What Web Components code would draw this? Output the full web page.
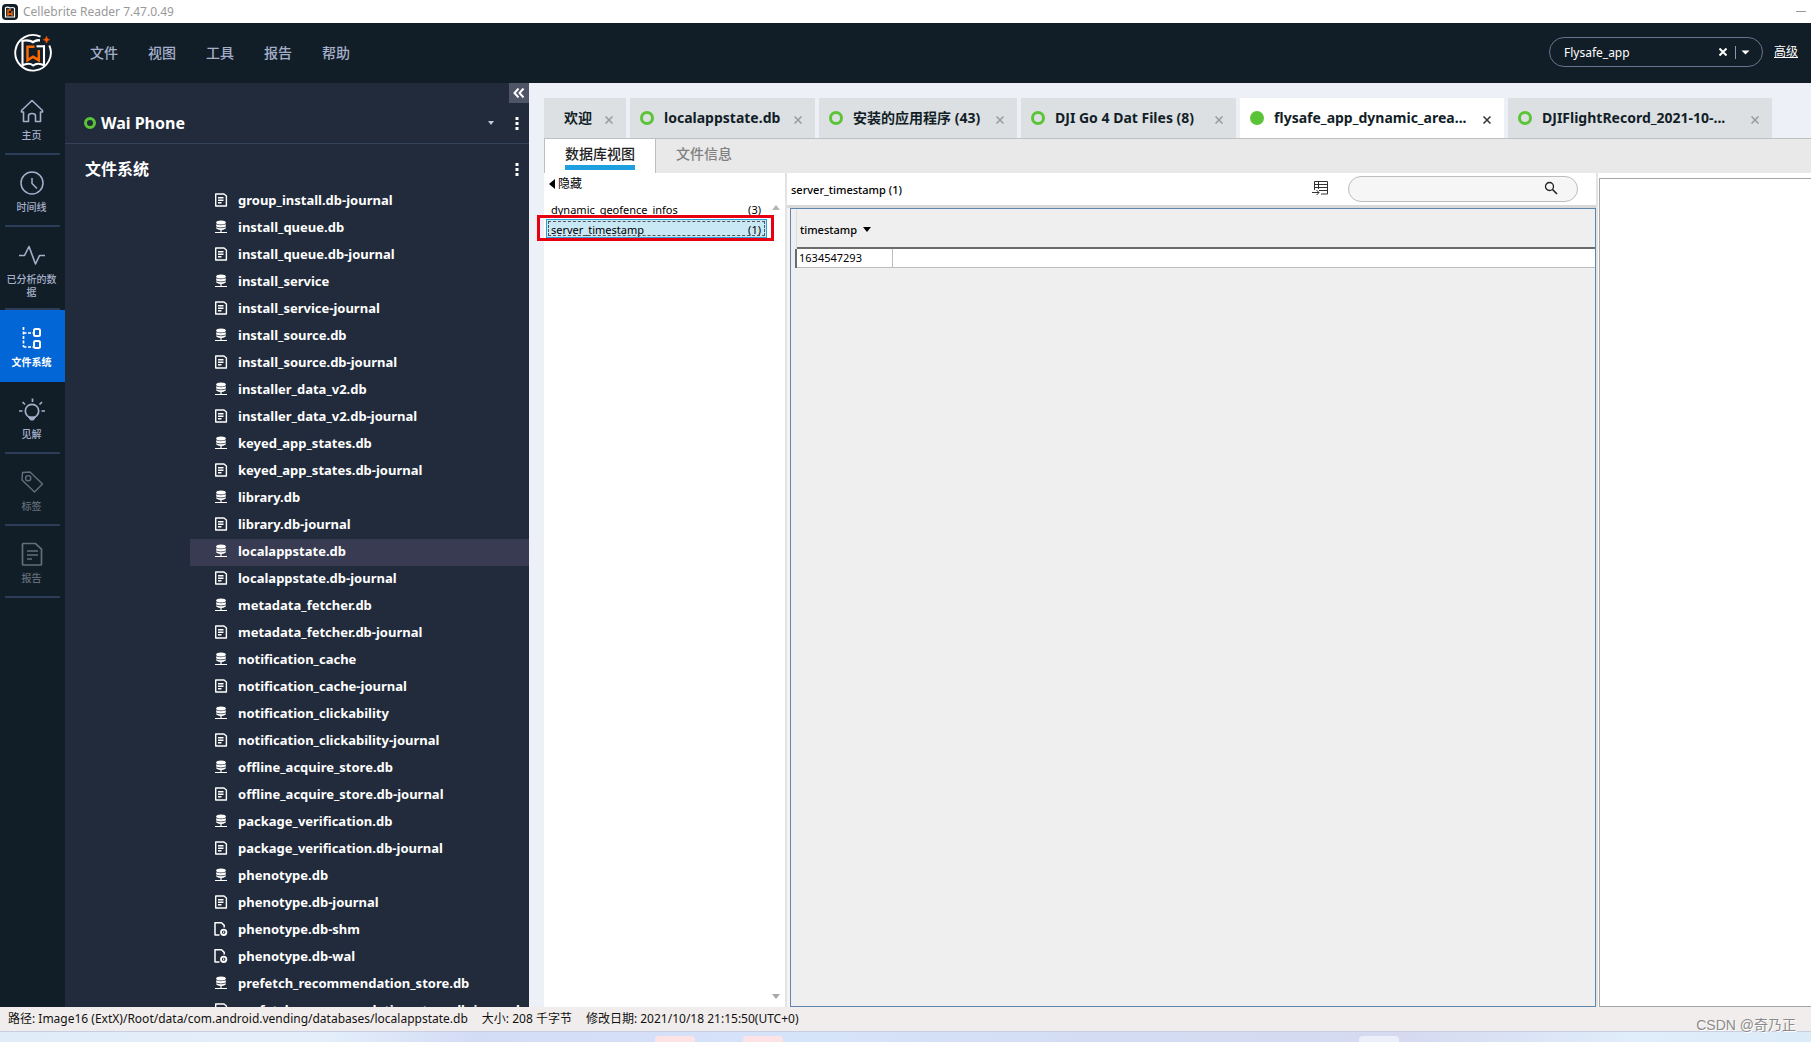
<!DOCTYPE html>
<html lang="zh">
<head>
<meta charset="utf-8">
<title>Cellebrite Reader 7.47.0.49</title>
<style>
  html, body { margin: 0; height: 100%; }
  body { font-family: "Noto Sans", "Noto Sans CJK SC", sans-serif; font-size: 12px; line-height: 18px; color: #000; overflow: hidden; }
</style>
</head>
<body>
<reader-app></reader-app>
<script>
const RESET = `
  *, *::before, *::after { box-sizing: border-box; }
  button { font: inherit; color: inherit; background: none; border: 0; padding: 0; margin: 0; display: flex; align-items: center; }
  svg { display: block; flex: none; }
`;
const define = (name, css, html) => {
  customElements.define(name, class extends HTMLElement {
    constructor() {
      super();
      const root = this.attachShadow({ mode: 'open' });
      root.innerHTML = `<style>${RESET}${css}</style>${typeof html === 'function' ? html(this) : html}`;
    }
  });
};

const LOGO = (size) => `<svg width="${size}" height="${size}" viewBox="0 0 40 40" fill="none" aria-hidden="true">
  <path d="M27.500 3.600A17.800 17.800 0 1 0 36.300 12.500" stroke="#fff" stroke-width="1.900"/>
  <path d="M9.500 8v24M31 12.500v19.500M9 32.500q7-3.500 11.200 0q4.300-3.500 11.300 0" stroke="#fff" stroke-width="2.100"/>
  <path d="M8.500 7q7.500-2 11.500.800q4-2.800 7-1.500v2.200q-4-.500-7 2q-4-3-11.500-1.500z" fill="#fff"/>
  <path d="M23.500 13.300h8.500" stroke="#fff" stroke-width="2.100"/>
  <path d="M21.500 13.800H14.500v13.400l5.500-3.400 5.800 3.400V17" stroke="#ff6a00" stroke-width="2.500"/>
  <path d="M33.500 3.200q.4 3.100 3.300 3.500q-2.900.4-3.300 3.500q-.4-3.100-3.300-3.500q2.900-.4 3.300-3.500z" fill="#ff5a00" stroke="#ff5a00" stroke-width=".6"/>
</svg>`;

const NAV_ICONS = {
  home: `<path d="M2.500 12.500 13 2.500l10.500 10V14h-2v9.500h-5V18q0-2.500-3.500-2.500T9.500 18v5.500h-5V14h-2z" stroke-width="1.600" stroke-linejoin="round"/>`,
  clock: `<circle cx="13" cy="13" r="11" stroke-width="1.500"/><path d="M13 8v5.500l5 5" stroke-width="1.500"/>`,
  pulse: `<path d="M0 13.500h5.500L10 4.500l6.500 17.500 4-8.500H26" stroke-width="1.600" stroke-linejoin="round"/>`,
  tree: `<path d="M4.500 2v20M4.500 8h10M4.500 22h10" stroke-width="1.700" stroke-dasharray="3 1.500"/><rect x="15" y="4" width="6" height="7" rx="1.500" stroke-width="2"/><rect x="15" y="16" width="6" height="7" rx="1.500" stroke-width="2"/>`,
  bulb: `<circle cx="13" cy="14" r="6.700" stroke-width="1.700"/><path d="M9.500 20h7l-2 3h-3z" fill="currentColor"/><path d="M13.500 1.500V5M3.500 5l2.500 2.500M23 5l-2.500 2.500M0 14h3.500M22.500 14H26" stroke-width="1.700"/>`,
  tag: `<path d="M3.500 3.500 11 3l12.500 12-8 8L3 11z" stroke-width="1.400" stroke-linejoin="round"/><circle cx="9.200" cy="9.200" r="2.600" stroke-width="1.400"/>`,
  report: `<path d="M4 2.500h12.500l6 5.500v15q0 1-1 1h-17q-1 0-1-1V3.500z" stroke-width="1.700"/><path d="M8 10h11M8 14h11M8 18h5" stroke-width="1.500"/>`
};
const FILE_ICONS = {
  db: `<ellipse cx="7" cy="2.500" rx="4.800" ry="2" fill="#fff"/><path d="M2.200 4.200q4.800 2 9.600 0v2.300q-4.800 2-9.600 0zM2.200 7.200q4.800 2 9.600 0v1.300q-4.800 3-9.600 0z" fill="#fff"/><path d="M7 9v3.500M1 12.500h12" stroke="#fff" stroke-width="1.200"/>`,
  doc: `<path d="M1.700 1h8.300l2.400 2v10H1.700z" stroke="#fff" stroke-width="1.400" stroke-linejoin="round"/><path d="M4 4.700h5.500M4 7.200h5.500M4 9.700h3.500" stroke="#fff" stroke-width="1.400"/>`,
  tmp: `<path d="M5.500 13H1V.800h6.500l2.700 2.600v2" stroke="#fff" stroke-width="1.500" stroke-linejoin="round"/><circle cx="9.700" cy="10.300" r="2.700" stroke="#fff" stroke-width="1.800"/><path d="M9.700 9.300v2" stroke="#fff"/>`
};
const RING = `<svg width="14" height="14" viewBox="0 0 14 14"><circle class="ring" cx="7" cy="7" r="5.500" fill="none" stroke="#5ac436" stroke-width="3"/></svg>`;
const CROSS = (s, w) => `<svg width="${s}" height="${s}" viewBox="0 0 8 8"><path d="M.5.5l7 7M7.500.500l-7 7" stroke="currentColor" stroke-width="${w}"/></svg>`;
const DOTS = `<svg width="4" height="14" viewBox="0 0 4 14" fill="#fff"><rect x=".5" y="1" width="3" height="3"/><rect x=".5" y="6" width="3" height="3"/><rect x=".5" y="11" width="3" height="3"/></svg>`;

define('title-bar', `
  :host { display: flex; align-items: center; gap: 5px; height: 23px; padding: 0 5px 0 2px; background: #fff; color: #999; font-size: 12px; }
  .app { width: 16px; height: 16px; border-radius: 4px; background: #121e27; display: grid; place-items: center; }
  .min { margin-left: auto; width: 10px; height: 16px; }
  .min i { width: 10px; height: 1px; background: #999; }
`, `<span class="app"><svg width="12" height="12" viewBox="0 0 12 12" fill="none"><path d="M1.500 1.500v9.500h9V2M1.500 1.500Q4 .500 6 2q2-1 4.500 0" stroke="#fff" stroke-width="1.200"/><path d="M7 4H4v5l2-1.500L8 9V5" stroke="#ff6a00" stroke-width="1.400"/></svg></span>
<slot></slot><button class="min" aria-label="最小化"><i></i></button>`);

define('menu-bar', `
  :host { display: flex; align-items: center; height: 60px; padding: 0 13px; background: #121e27; color: #a5afca; }
  nav { display: flex; gap: 30px; margin-left: 37px; font-size: 14px; font-weight: 500; }
  form { display: flex; align-items: center; margin: 0 11px 2px auto; width: 214px; height: 30px; padding: 0 12px 0 14px; border: 1px solid #69758f; border-radius: 15px; color: #fff; }
  input { flex: 1; min-width: 0; border: 0; padding: 2px 0 0; outline: 0; background: none; color: #fff; font: inherit; font-size: 12px; }
  .drop { height: 13px; margin-left: 8px; padding-left: 5px; border-left: 1px solid #8d97ad; }
  a { color: #fff; font-size: 12px; margin-bottom: 2px; }
`, `${LOGO(40)}<nav><button>文件</button><button>视图</button><button>工具</button><button>报告</button><button>帮助</button></nav>
<form><input aria-label="搜索" value="Flysafe_app"><button type="button" aria-label="清除">${CROSS(8, 2)}</button><button type="button" class="drop" aria-label="选项"><svg width="9" height="5" viewBox="0 0 9 5"><path d="M.5.5h8l-4 4z" fill="#fff"/></svg></button></form><a href="#">高级</a>`);

define('nav-item', `
  :host { display: block; height: 72px; color: #a5afca; }
  :host([tall]) { height: 83px; }
  :host([disabled]) { color: #646d7b; }
  button { width: 100%; height: 100%; flex-direction: column; gap: 5px; padding: 15px 2px 0 0; position: relative; font-size: 10px; line-height: 13px; font-weight: 500; text-align: center; }
  button::after { content: ""; position: absolute; left: 5px; right: 5px; bottom: 0; height: 2px; background: #2e3d57; }
  :host([active]) { background: #0366d6; color: #fff; }
  :host([active]) button { font-weight: 700; }
  :host([active]) button::after { display: none; }
  span { display: block; width: 52px; }
`, (el) => `<button><svg width="26" height="26" viewBox="0 0 26 26" fill="none" stroke="currentColor">${NAV_ICONS[el.getAttribute('icon')]}</svg><span><slot></slot></span></button>`);

define('side-nav', `:host { display: block; width: 65px; flex: none; background: #121e27; }`,
`<nav><nav-item icon="home">主页</nav-item><nav-item icon="clock">时间线</nav-item><nav-item icon="pulse" tall>已分析的数据</nav-item><nav-item icon="tree" active>文件系统</nav-item><nav-item icon="bulb">见解</nav-item><nav-item icon="tag" disabled>标签</nav-item><nav-item icon="report" disabled>报告</nav-item></nav>`);

define('file-row', `
  :host { display: flex; align-items: center; gap: 10px; height: 27px; margin-left: 125px; padding: 0 0 4px 24px; color: #fff; font-size: 13px; font-weight: 700; white-space: nowrap; box-sizing: border-box; }
  :host([selected]) { background: #383b51; }
`, (el) => `<svg width="14" height="14" viewBox="0 0 14 14" fill="none">${FILE_ICONS[el.getAttribute('icon')]}</svg><slot></slot>`);

const FILES = `group_install.db-journal install_queue.db install_queue.db-journal install_service install_service-journal install_source.db install_source.db-journal installer_data_v2.db installer_data_v2.db-journal keyed_app_states.db keyed_app_states.db-journal library.db library.db-journal localappstate.db localappstate.db-journal metadata_fetcher.db metadata_fetcher.db-journal notification_cache notification_cache-journal notification_clickability notification_clickability-journal offline_acquire_store.db offline_acquire_store.db-journal package_verification.db package_verification.db-journal phenotype.db phenotype.db-journal phenotype.db-shm phenotype.db-wal prefetch_recommendation_store.db prefetch_recommendation_store.db-journal`.split(' ');
const iconFor = (f) => /-(shm|wal)$/.test(f) ? 'tmp' : /-journal$/.test(f) ? 'doc' : 'db';

define('file-panel', `
  :host { display: flex; flex-direction: column; width: 464px; flex: none; background: #212b3b; color: #fff; overflow: hidden; }
  .top { display: flex; justify-content: flex-end; height: 20px; flex: none; }
  .top button { width: 20px; background: #4f5467; justify-content: center; }
  .device, .section { display: flex; align-items: center; flex: none; padding: 0 10px 0 18px; font-weight: 700; }
  .device { height: 41px; border-bottom: 1px solid #34425a; gap: 4px; font-size: 16px; }
  .device .open { margin-left: auto; margin-right: 17px; }
  .section { height: 44px; padding-left: 20px; padding-top: 6px; justify-content: space-between; font-size: 16px; }
  .list { flex: 1; min-height: 0; overflow: hidden; }
  file-row { flex: none; }
`, `<div class="top"><button aria-label="折叠"><svg width="12" height="10" viewBox="0 0 12 10" fill="none"><path d="M5.500.500 1.500 5l4 4.500M10.500.500 6.500 5l4 4.500" stroke="#fff" stroke-width="2"/></svg></button></div>
<div class="device"><svg width="14" height="14" viewBox="0 0 14 14"><circle cx="7" cy="7" r="4.500" fill="none" stroke="#5ac436" stroke-width="3"/></svg>Wai Phone<button class="open" aria-label="选择设备"><svg width="6" height="4" viewBox="0 0 6 4"><path d="M0 0h6L3 4z" fill="#c3c8d4"/></svg></button><button aria-label="更多">${DOTS}</button></div>
<div class="section">文件系统<button aria-label="更多">${DOTS}</button></div>
<div class="list">${FILES.map((f, i) => `<file-row icon="${iconFor(f)}"${i === 13 ? ' selected' : ''}>${f}</file-row>`).join('')}</div>`);

define('doc-tab', `
  :host { display: flex; align-items: center; height: 40px; padding: 0 13px 0 10px; background: #dce0e3; color: #121e27; font-size: 14px; font-weight: 700; white-space: nowrap; box-sizing: border-box; }
  :host([active]) { background: #fff; }
  :host([active]) .ring { fill: #5ac436; }
  :host([plain]) { padding-left: 20px; }
  :host([plain]) svg:has(.ring) { display: none; }
  .label { flex: 1; margin: 0 13px 0 10px; }
  :host([plain]) .label { margin-left: 0; }
  button { color: #98999b; padding-top: 3px; }
  :host([active]) button { color: #333; }
`, `${RING}<span class="label"><slot></slot></span><button aria-label="关闭">${CROSS(8, 1.500)}</button>`);

define('tab-strip', `
  :host { display: flex; gap: 4px; padding-top: 15px; border-bottom: 1px solid #bfbfbf; }
  .s { min-width: 185px; } .m { min-width: 198px; } .l { min-width: 215px; } .xl { min-width: 264px; }
`,
`<doc-tab plain>欢迎</doc-tab><doc-tab class="s">localappstate.db</doc-tab><doc-tab class="m">安装的应用程序 (43)</doc-tab><doc-tab class="l">DJI Go 4 Dat Files (8)</doc-tab><doc-tab class="xl" active>flysafe_app_dynamic_area...</doc-tab><doc-tab class="xl">DJIFlightRecord_2021-10-...</doc-tab>`);

define('view-tabs', `
  :host { display: flex; height: 34px; background: #e9e9e9; font-size: 14px; font-weight: 500; }
  button { align-items: flex-start; padding: 4px 20px 0; color: #808080; line-height: 22px; }
  button[aria-selected=true] { background: #fff; border: solid #bfbfbf; border-width: 0 1px; color: #222; }
  button[aria-selected=true] span { border-bottom: 5px solid #1e9fe0; }
`, `<button role="tab" aria-selected="true"><span>数据库视图</span></button><button role="tab" aria-selected="false"><span>文件信息</span></button>`);

define('table-list', `
  :host { display: flex; flex-direction: column; width: 241px; flex: none; background: #fff; }
  .hide { gap: 3px; height: 22px; padding-left: 5px; }
  .body { display: flex; flex: 1; margin-top: 5px; min-height: 0; }
  .items { flex: 1; padding-left: 2px; font-size: 11px; }
  .item { width: 221px; height: 19px; padding: 0 6px 0 5px; justify-content: space-between; }
  .sel { position: relative; background: #c9e8f5; border: 1px solid #26a0da; padding: 2px 5px 0 4px; outline: 1px dashed #555; outline-offset: -3px; }
  .sel::after { content: ""; position: absolute; inset: -5px -8px -4px -10px; border: 3px solid #e60012; }
  .bar { display: flex; flex-direction: column; justify-content: space-between; align-items: center; width: 18px; padding: 5px 0 8px; }
`, `<button class="hide"><svg width="6" height="10" viewBox="0 0 6 10"><path d="M6 0v10L0 5z"/></svg>隐藏</button>
<div class="body"><div class="items"><button class="item"><span>dynamic_geofence_infos</span><span>(3)</span></button><button class="item sel"><span>server_timestamp</span><span>(1)</span></button></div>
<div class="bar"><svg width="8" height="5" viewBox="0 0 8 5"><path d="M4 0l4 5H0z" fill="#b5b5b5"/></svg><svg width="8" height="5" viewBox="0 0 8 5"><path d="M0 0h8L4 5z" fill="#a8a8a8"/></svg></div></div>`);

define('data-grid', `
  :host { display: flex; flex-direction: column; flex: 1; min-width: 0; background: #fff; border-left: 2px solid #e3e3e3; font-size: 11px; }
  .head { display: flex; align-items: center; height: 32px; padding: 0 18px 0 4px; flex: none; font-weight: 500; }
  .head span { padding-top: 2px; }
  .head svg.cols { margin: 0 20px 2px auto; }
  label { display: flex; align-items: center; width: 230px; height: 26px; border: 1px solid #bdbdbd; border-radius: 13px; background: #f6f6f6; padding: 0 19px 2px 14px; }
  input { flex: 1; min-width: 0; border: 0; outline: 0; padding: 0; background: none; font: inherit; }
  .wrap { flex: 1; padding: 3px 0 0 3px; background: linear-gradient(#d9d9d9 3px, #f4f4f4 3px); }
  .frame { height: 100%; border: 1px solid #5f87ae; background: #efefef; }
  table { width: 100%; border-collapse: separate; border-spacing: 0; table-layout: fixed; }
  th { height: 40px; text-align: left; font-weight: 500; padding: 3px 0 0 3px; border-bottom: 2px solid #6b6b6b; }
  th button { gap: 6px; }
  td { height: 19px; padding: 0 0 0 2px; line-height: 18px; background: #fff; border-bottom: 1px solid #bdbdbd; border-right: 1px solid #bdbdbd; }
  td:last-child { border-right: 0; }
  th.g, td.g { width: 6px; padding: 0; background: #efefef; border-bottom: 0; border-right: 1px solid #ddd; }
  td.g { border-right: 2px solid #6b6b6b; }
  .c1 { width: 96px; }
`, `<div class="head"><span>server_timestamp (1)</span><svg class="cols" width="16" height="15" viewBox="0 0 16 15" fill="none"><path d="M2.500 9V.500h13v12.500H9M2.500 3.500h13M2.500 6.500h13M7 9.500h8.500M6.500.500V8M0 11.500h7M4.500 9l2.500 2.500-2.500 2.700" stroke="#333"/></svg><label><input aria-label="筛选"><svg width="14" height="14" viewBox="0 0 14 14" fill="none"><circle cx="5.500" cy="5.500" r="4" stroke="#222" stroke-width="1.300"/><path d="M8.500 8.500l4.500 4.500" stroke="#222" stroke-width="1.600"/></svg></label></div>
<div class="wrap"><div class="frame"><table><colgroup><col style="width:6px"><col class="c1"><col></colgroup><thead><tr><th class="g"></th><th><button>timestamp<svg width="8" height="5" viewBox="0 0 8 5"><path d="M0 0h8L4 5z"/></svg></button></th><th></th></tr></thead><tbody><tr><td class="g"></td><td>1634547293</td><td></td></tr></tbody></table></div></div>`);

define('detail-pane', `
  :host { display: flex; width: 215px; flex: none; background: #fff; border-left: 2px solid #e3e3e3; padding: 5px 0 0 1px; box-sizing: border-box; }
  div { flex: 1; border: 1px solid #a6a6a6; border-right: 0; }
`, `<div></div>`);

define('work-area', `
  :host { display: flex; flex-direction: column; flex: 1; min-width: 0; padding-left: 15px; background: #edf0f6; }
  .panes { display: flex; flex: 1; min-height: 0; }
`, `<tab-strip></tab-strip><view-tabs></view-tabs><div class="panes"><table-list></table-list><data-grid></data-grid><detail-pane></detail-pane></div>`);

define('status-bar', `
  :host { display: flex; align-items: center; gap: 14px; height: 25px; padding: 0 8px; background: #f1edec; color: #111; font-size: 12px; border-bottom: 1px solid #c9cfe3; box-sizing: border-box; }
`, `<slot></slot>`);

define('task-bar', `
  :host { display: block; height: 10px; position: relative; background: linear-gradient(90deg, #e1ecf9 0, #e3eefa 18%, #d3dcf5 26%, #d6e4fa 45%, #d3dcf3 60%, #d5daf0 78%, #e0edfa 90%, #dcebf8 100%); }
  i { position: absolute; top: 4px; bottom: 0; width: 40px; border-radius: 4px 4px 0 0; background: #fde3e6; }
`, `<i style="left:655px"></i><i style="left:743px"></i><i style="left:1359px;background:#eceffa"></i>`);

define('reader-app', `
  :host { display: flex; flex-direction: column; height: 100vh; overflow: hidden; }
  main { display: flex; flex: 1; min-height: 0; }
  title-bar, menu-bar, status-bar, task-bar { flex: none; box-sizing: border-box; }
  .mark { position: absolute; right: 15px; bottom: 7px; font: 14px/20px "Liberation Sans", "Noto Sans CJK SC", sans-serif; color: #8b8b8b; text-shadow: 1px 1px 0 #fff; }
`, `<title-bar>Cellebrite Reader 7.47.0.49</title-bar><menu-bar></menu-bar>
<main><side-nav></side-nav><file-panel></file-panel><work-area></work-area></main>
<status-bar><span>路径: Image16 (ExtX)/Root/data/com.android.vending/databases/localappstate.db</span><span>大小: 208 千字节</span><span>修改日期: 2021/10/18 21:15:50(UTC+0)</span></status-bar>
<task-bar></task-bar><span class="mark">CSDN @奇乃正</span>`);
</script>
</body>
</html>
